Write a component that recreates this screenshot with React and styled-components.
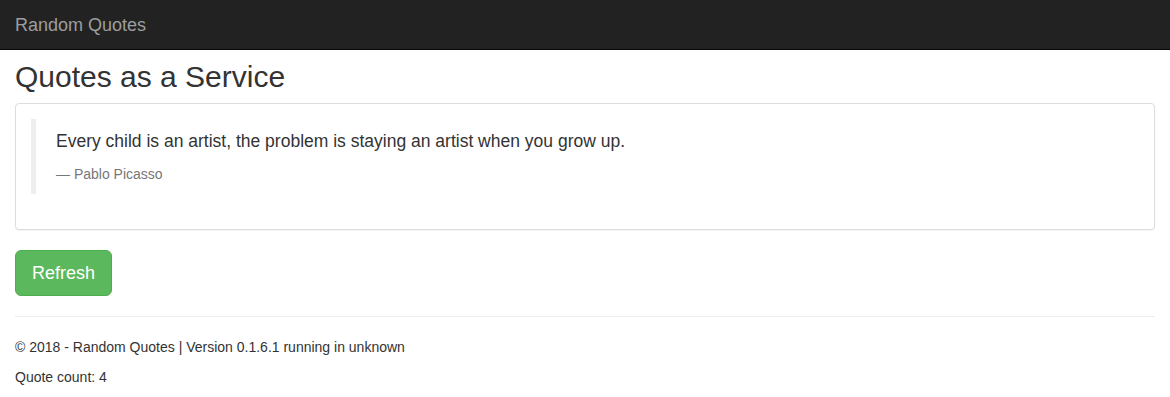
import React from "react";
import styled, { createGlobalStyle } from "styled-components";

const Global = createGlobalStyle`
  * { box-sizing: border-box; }
  html, body { margin: 0; padding: 0; background: #fff; }
  body {
    font-family: "Liberation Sans", Arial, Helvetica, sans-serif;
    font-size: 14px;
    line-height: 1.42857143;
    color: #333;
  }
`;

const Navbar = styled.nav`
  height: 50px;
  background: #222;
  border-bottom: 1px solid #080808;
  display: flex;
  align-items: flex-start;
`;

const Brand = styled.a`
  display: block;
  padding: 15px;
  font-size: 18px;
  line-height: 20px;
  color: #9d9d9d;
  text-decoration: none;
`;

const Container = styled.main`
  padding: 0 15px;
`;

const Title = styled.h2`
  margin: 10px 0;
  font-size: 30px;
  font-weight: 500;
  line-height: 1.1;
  color: #333;
`;

const Panel = styled.section`
  border: 1px solid #ddd;
  border-radius: 4px;
  background: #fff;
  box-shadow: 0 1px 1px rgba(0, 0, 0, 0.05);
  margin-bottom: 20px;
`;

const PanelBody = styled.div`
  padding: 15px;
`;

const Blockquote = styled.blockquote`
  margin: 0 0 20px;
  padding: 10px 20px;
  border-left: 5px solid #eee;
  font-size: 17.5px;
`;

const QuoteText = styled.p`
  margin: 0 0 10px;
`;

const QuoteFooter = styled.footer`
  display: block;
  font-size: 80%;
  line-height: 1.42857143;
  color: #777;
`;

const Button = styled.button`
  display: inline-block;
  padding: 10px 16px;
  font-family: inherit;
  font-size: 18px;
  line-height: 1.3333333;
  border-radius: 6px;
  color: #fff;
  background: #5cb85c;
  border: 1px solid #4cae4c;
  cursor: pointer;
`;

const Rule = styled.hr`
  margin: 20px 0;
  border: 0;
  border-top: 1px solid #eee;
`;

const FooterText = styled.p`
  margin: 0 0 10px;
`;

export default function App() {
  return (
    <>
      <Global />
      <Navbar>
        <Brand href="#">Random Quotes</Brand>
      </Navbar>
      <Container>
        <Title>Quotes as a Service</Title>
        <Panel>
          <PanelBody>
            <Blockquote>
              <QuoteText>
                Every child is an artist, the problem is staying an artist when you grow up.
              </QuoteText>
              <QuoteFooter>{"\u2014\u00a0Pablo Picasso"}</QuoteFooter>
            </Blockquote>
          </PanelBody>
        </Panel>
        <Button type="button">Refresh</Button>
        <Rule />
        <footer>
          <FooterText>© 2018 - Random Quotes | Version 0.1.6.1 running in unknown</FooterText>
          <FooterText>Quote count: 4</FooterText>
        </footer>
      </Container>
    </>
  );
}
